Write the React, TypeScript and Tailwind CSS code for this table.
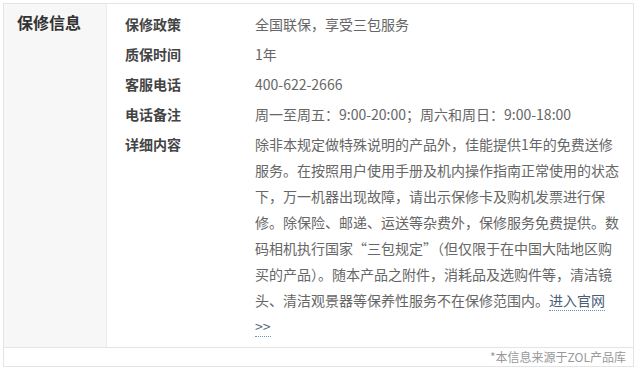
const rows: { label: string; value: string }[] = [
  { label: "保修政策", value: "全国联保，享受三包服务" },
  { label: "质保时间", value: "1年" },
  { label: "客服电话", value: "400-622-2666" },
  { label: "电话备注", value: "周一至周五：9:00-20:00；周六和周日：9:00-18:00" },
];

const detail =
  "除非本规定做特殊说明的产品外，佳能提供1年的免费送修服务。在按照用户使用手册及机内操作指南正常使用的状态下，万一机器出现故障，请出示保修卡及购机发票进行保修。除保险、邮递、运送等杂费外，保修服务免费提供。数码相机执行国家“三包规定”（但仅限于在中国大陆地区购买的产品）。随本产品之附件，消耗品及选购件等，清洁镜头、清洁观景器等保养性服务不在保修范围内。";

export default function App() {
  return (
    <div
      lang="zh-CN"
      className="min-h-[372px] bg-white pl-[3px] pt-[3px] font-['Noto_Sans_CJK_SC','Liberation_Sans',sans-serif]"
    >
      <div className="w-[631px] border border-[#e4e4e4]">
        <div className="flex border-b border-[#e4e4e4]">
          <div className="w-[103px] shrink-0 border-r border-[#ececec] bg-[#f7f7f7] pl-[13px] pt-[6px]">
            <h2 className="text-[16px] font-bold leading-[24px] text-[#333]">
              保修信息
            </h2>
          </div>
          <div className="flex flex-col gap-[4px] pb-[8px] pl-[18px] pt-[7px]">
            {rows.map((r) => (
              <div key={r.label} className="flex text-[14px] leading-[26px]">
                <span className="w-[130px] shrink-0 font-bold text-[#444]">
                  {r.label}
                </span>
                <span className="w-[368px] text-[#666]">{r.value}</span>
              </div>
            ))}
            <div className="flex text-[14px] leading-[26px]">
              <span className="w-[130px] shrink-0 font-bold text-[#444]">
                详细内容
              </span>
              <p className="w-[368px] text-[#666]">
                {detail}
                <a
                  href="#"
                  className="border-b border-dotted border-[#6b8fc2] text-[#4a5c78]"
                >
                  进入官网 &gt;&gt;
                </a>
              </p>
            </div>
          </div>
        </div>
        <div className="h-[18px] pr-[7px] text-right text-[12px] leading-[18px] text-[#999]">
          *本信息来源于ZOL产品库
        </div>
      </div>
    </div>
  );
}
